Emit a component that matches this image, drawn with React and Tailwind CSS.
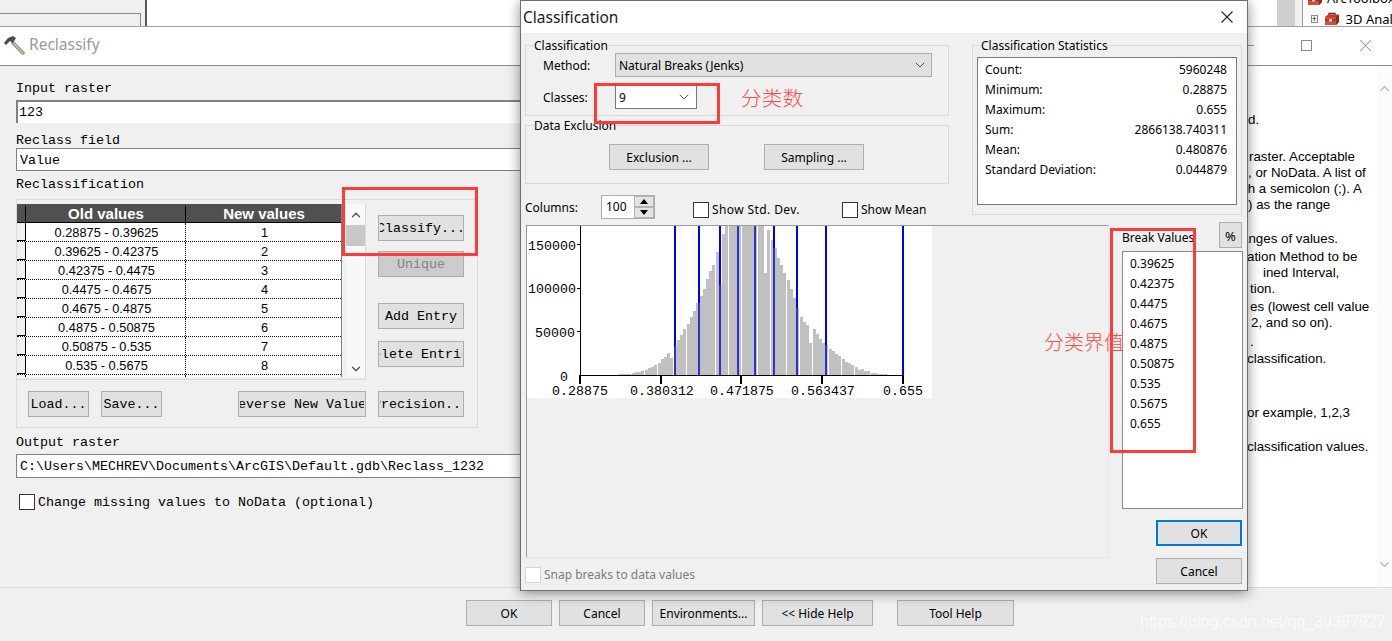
import { ChevronDown, ChevronUp } from "lucide-react"

const rows = [
  ["0.28875 - 0.39625", 1],
  ["0.39625 - 0.42375", 2],
  ["0.42375 - 0.4475", 3],
  ["0.4475 - 0.4675", 4],
  ["0.4675 - 0.4875", 5],
  ["0.4875 - 0.50875", 6],
  ["0.50875 - 0.535", 7],
  ["0.535 - 0.5675", 8],
  ["0.5675 - 0.655", 9],
]

const stats = [
  ["Count:", "5960248"],
  ["Minimum:", "0.28875"],
  ["Maximum:", "0.655"],
  ["Sum:", "2866138.740311"],
  ["Mean:", "0.480876"],
  ["Standard Deviation:", "0.044879"],
]

const breaks = ["0.39625", "0.42375", "0.4475", "0.4675", "0.4875", "0.50875", "0.535", "0.5675", "0.655"]

const helpLines = [
  { text: "d.", cls: "mt-[46px] pl-[48px]" },
  { text: "raster. Acceptable", cls: "mt-[21px] pl-[49px]" },
  { text: ", or NoData. A list of", cls: "pl-[48px]" },
  { text: "th a semicolon (;). A", cls: "pl-[44px]" },
  { text: ") as the range", cls: "pl-[48px]" },
  { text: "anges of values.", cls: "mt-[18px] pl-[41px]" },
  { text: "ation Method to be", cls: "mt-[2px] pl-[47px]" },
  { text: "ined Interval,", cls: "pl-[63px]" },
  { text: "tion.", cls: "pl-[50px]" },
  { text: "es (lowest cell value", cls: "mt-[2px] pl-[50px]" },
  { text: "2, and so on).", cls: "pl-[51px]" },
  { text: ".", cls: "mt-[3px] pl-[50px]" },
  { text: "classification.", cls: "mt-[1px] pl-[47px]" },
  { text: "or example, 1,2,3", cls: "mt-[38px] pl-[47px]" },
  { text: "classification values.", cls: "mt-[18px] pl-[47px]" },
]

// histogram column heights in px, starting at column 12
const barHeights = [
  1, 1, 1, 1, 2, 3.3, 3.3, 4.5, 5.5, 7, 8.5, 10, 12, 16, 18, 22, 17, 29, 35, 40, 46, 51, 58, 64, 72, 79, 86, 96, 104, 110,
  123, 90, 141, 160, 160, 160, 160, 160, 160, 160, 160, 160, 160, 160, 160, 102, 145, 135, 127, 117, 110, 102, 95, 86, 77,
  67, 58, 53, 50, 32, 46, 41, 36, 32, 30, 26, 24, 21, 19, 16, 13, 12, 10, 8, 5, 6, 4.3, 3.7, 2.3, 2.3, 1, 1, 1,
]
const breakLines = [675, 699, 720, 738, 755, 774, 797, 826, 903]
const xLabels = [
  ["0.28875", 580, 552],
  ["0.380312", 661, 630],
  ["0.471875", 741, 710],
  ["0.563437", 822, 791],
  ["0.655", 903, 883],
]
const yLabels = [
  ["150000", 245, 528],
  ["100000", 288, 528],
  ["50000", 332, 535],
]

const tones = {
  normal: "border border-[#adadad] bg-[#e1e1e1]",
  disabled: "border border-[#adadad] bg-[#cccccc] text-[#838383]",
  focus: "border-2 border-[#0078d7] bg-[#e1e1e1]",
}

const Btn = ({ children, className = "", tone = "normal" }) => (
  <div className={`flex h-[26px] shrink-0 items-center whitespace-nowrap pt-[2px] ${tones[tone]} ${className}`}>
    <div className="mx-px flex min-w-0 flex-1 justify-center overflow-hidden">
      <span className="shrink-0">{children}</span>
    </div>
  </div>
)

const Histogram = () => (
  <svg viewBox="527 226 405 172" className="block h-[172px] w-[405px] bg-white">
    {barHeights.map((h, i) => {
      const x = Math.round(580 + (i + 12) * 3.23)
      return <rect key={i} x={x} y={375 - h} width="3" height={h} fill="#c0c0c0" shapeRendering="crispEdges" />
    })}
    {breakLines.map((x) => {
      const col = Math.floor((x - 580) / 3.23) - 12
      const h = barHeights[col] || 0
      return (
        <g key={x} shapeRendering="crispEdges">
          <rect x={x - 1} y="226" width="2" height={149 - h} fill="#0000ff" />
          <rect x={x - 1} y={375 - h} width="2" height={h} fill="#3030d0" />
          <rect x={x - 1} y="375" width="2" height="1" fill="#ffff60" />
        </g>
      )
    })}
    <g fill="#000" shapeRendering="crispEdges">
      <rect x="580" y="226" width="1" height="150" />
      <rect x="579" y="375" width="325" height="1" />
      <rect x="577" y="244" width="4" height="1" />
      <rect x="577" y="288" width="4" height="1" />
      <rect x="577" y="331" width="4" height="1" />
      {xLabels.map(([label, x]) => (
        <rect key={label} x={x - 1} y="376" width="2" height="8" />
      ))}
    </g>
    <g fontFamily="'Liberation Mono', monospace" fontSize="13.3" fill="#000">
      {yLabels.map(([label, y, x]) => (
        <text key={label} x={x} y={y + 5}>
          {label}
        </text>
      ))}
      <text x="564" y="381" textAnchor="middle">
        0
      </text>
      {xLabels.map(([label, , x]) => (
        <text key={label} x={x} y="395">
          {label}
        </text>
      ))}
    </g>
  </svg>
)

const Toolbox = () => (
  <svg width="16" height="14" viewBox="0 0 16 14" className="shrink-0">
    <path d="M5 3 V1.5 H11 V3" fill="none" stroke="#6b2a20" strokeWidth="1.3" />
    <path d="M1 5 L4 2.5 H15 V10 L12 13 H1 Z" fill="#b5402f" />
    <path d="M1 5 H12 V13 H1 Z" fill="#c9513d" />
    <path d="M12 5 L15 2.5 V10 L12 13 Z" fill="#8a2c20" />
    <path d="M1 8 H12" stroke="#7d2a1e" />
    <rect x="5" y="7" width="3" height="2.5" fill="#e8c9a0" />
  </svg>
)

const Hammer = () => (
  <svg width="22" height="22" viewBox="0 0 22 22" className="shrink-0">
    <path d="M10 9 L20 19" stroke="#8f8468" strokeWidth="3.4" strokeLinecap="round" />
    <path d="M10 9 L20 19" stroke="#d2c8ae" strokeWidth="1.4" strokeLinecap="round" />
    <path d="M1 9 L5 4 L10 2 L13 4 L10 9 L7 7 L3 11 Z" fill="#4a4a4a" />
  </svg>
)

const Spinner = () => (
  <div className="flex h-[24px] w-[54px] border border-[#adadad] bg-white">
    <div className="flex w-[32px] items-center pl-[4px]">100</div>
    <div className="flex w-[20px] flex-col bg-[#e4e4e4]">
      <div className="flex h-[11px] items-center justify-center border border-[#b4b4b4]">
        <svg width="8" height="5" viewBox="0 0 8 5">
          <path d="M4 0 L8 5 H0 Z" fill="#000" />
        </svg>
      </div>
      <div className="flex h-[11px] items-center justify-center border border-[#b4b4b4]">
        <svg width="8" height="5" viewBox="0 0 8 5">
          <path d="M0 0 H8 L4 5 Z" fill="#000" />
        </svg>
      </div>
    </div>
  </div>
)

const ClassificationDialog = () => (
  <div className="absolute left-[520px] top-0 flex h-[591px] w-[728px] flex-col border border-[#6f6f6f] bg-[#f0f0f0] font-['Noto_Sans',sans-serif] text-[12px] leading-[16px] text-black shadow-[0_2px_12px_rgba(0,0,0,0.45)]">
    <div className="flex h-[32px] shrink-0 items-center justify-between bg-white pl-[2px] pr-[14px]">
      <span className="text-[15.5px] text-[#1a1a1a]">Classification</span>
      <svg width="12" height="12" viewBox="0 0 12 12">
        <path d="M0.5 0.5 L11.5 11.5 M11.5 0.5 L0.5 11.5" stroke="#222" strokeWidth="1.1" />
      </svg>
    </div>

    <div className="flex pl-[4px] pt-[4px]">
      <div className="w-[424px]">
        <fieldset className="border border-[#d9d9d9]">
          <legend className="ml-[8px] h-[16px] leading-[18px]">Classification</legend>
          <div className="flex h-[24px] items-center pl-[17px]">
            <span className="w-[72px] pt-[2px]">Method:</span>
            <div className="flex h-[24px] w-[317px] items-center justify-between border border-[#adadad] bg-[#e1e1e1] px-[3px]">
              <span className="pt-[2px]">Natural Breaks (Jenks)</span>
              <ChevronDown size={16} strokeWidth={1} />
            </div>
          </div>
          <div className="mb-[6px] mt-[8px] flex h-[24px] items-center pl-[17px]">
            <span className="w-[72px] pt-[2px]">Classes:</span>
            <div className="flex h-[24px] w-[82px] items-center justify-between border border-[#7a7a7a] bg-white px-[3px]">
              <span className="pt-[2px]">9</span>
              <ChevronDown size={16} strokeWidth={1} className="mr-px" />
            </div>
          </div>
        </fieldset>
        <fieldset className="mt-[1px] border border-[#d9d9d9]">
          <legend className="ml-[8px] h-[16px] leading-[18px]">Data Exclusion</legend>
          <div className="flex pb-[13px] pl-[83px] pt-[11px]">
            <Btn className="w-[100px]">Exclusion ...</Btn>
            <Btn className="ml-[55px] w-[100px]">Sampling ...</Btn>
          </div>
        </fieldset>
        <div className="mt-[11px] flex h-[24px] items-center">
          <span className="w-[76px] pt-[2px]">Columns:</span>
          <Spinner />
          <div className="ml-[38px] mt-[6px] flex items-center">
            <div className="h-[16px] w-[16px] border border-[#333] bg-white" />
            <span className="ml-[3px] w-[88px] whitespace-nowrap tracking-[0.4px]">Show Std. Dev.</span>
          </div>
          <div className="ml-[42px] mt-[6px] flex items-center">
            <div className="h-[16px] w-[16px] border border-[#333] bg-white" />
            <span className="ml-[3px] whitespace-nowrap">Show Mean</span>
          </div>
        </div>
      </div>
      <fieldset className="ml-[23px] h-[178px] w-[270px] border border-[#d9d9d9]">
        <legend className="ml-[8px] h-[16px] leading-[18px]">Classification Statistics</legend>
        <div className="mx-[4px] mt-[4px] h-[148px] border border-[#7a7a7a] bg-white pl-[7px] pr-[9px] pt-[2px]">
          {stats.map(([label, value]) => (
            <div key={label} className="flex h-[20px] items-center justify-between">
              <span>{label}</span>
              <span>{value}</span>
            </div>
          ))}
        </div>
      </fieldset>
    </div>

    <div className="mt-[3px] flex flex-1 pl-[5px]">
      <div className="w-[583px] pt-[3px]">
        <div className="h-[333px] border-b border-l border-r border-t border-b-[#e8e8e8] border-l-[#9a9a9a] border-r-[#e8e8e8] border-t-[#9a9a9a]">
          <Histogram />
        </div>
        <div className="ml-[-1px] mt-[9px] flex items-center text-[#7d7d7d]">
          <div className="h-[16px] w-[16px] border border-[#d4d4d4] bg-white" />
          <span className="ml-[3px]">Snap breaks to data values</span>
        </div>
      </div>
      <div className="ml-[13px] flex w-[121px] flex-col">
        <div className="flex h-[26px] items-center justify-between">
          <span className="pt-[5px]">Break Values</span>
          <Btn className="mr-px w-[23px] text-[13px]">%</Btn>
        </div>
        <div className="mt-[3px] h-[258px] border border-[#8a8a8a] bg-white pl-[7px] pt-[2px]">
          {breaks.map((b) => (
            <div key={b} className="flex h-[20px] items-center">
              {b}
            </div>
          ))}
        </div>
        <Btn tone="focus" className="ml-[34px] mt-[11px] w-[86px]">
          OK
        </Btn>
        <Btn className="ml-[34px] mt-[12px] w-[86px]">Cancel</Btn>
      </div>
    </div>
  </div>
)

const ReclassTable = () => (
  <div className="flex h-[176px] w-[349px] border-b border-r border-[#dadada]">
    <div className="h-[173px] w-[325px] overflow-hidden border-r border-[#808080] bg-white font-['Liberation_Sans',sans-serif] text-[12.8px] text-black">
      <div className="flex h-[19px] border-b border-black bg-[#505050] pt-[2px] text-[15px] font-bold text-white">
        <div className="w-[9px] border-r border-black" />
        <div className="flex w-[160px] items-center justify-center border-r border-black pl-px">Old values</div>
        <div className="flex flex-1 items-center justify-center pl-px">New values</div>
      </div>
      {rows.map(([range, value]) => (
        <div key={value} className="flex h-[19px] border-b border-dotted border-black">
          <div className="w-[9px] border-b border-r border-black bg-[#f0f0f0]" />
          <div className="flex w-[160px] items-center justify-center border-r border-dotted border-black pl-[2px] pt-[2px]">
            {range}
          </div>
          <div className="flex flex-1 items-center justify-center pl-[2px] pt-[2px]">{value}</div>
        </div>
      ))}
    </div>
    <div className="ml-[4px] flex h-[173px] w-[19px] flex-col items-center bg-[#f8f8f8]">
      <ChevronUp size={14} strokeWidth={2.4} className="mt-[4px] text-[#555]" />
      <div className="mt-[3px] h-[21px] w-full bg-[#c8c8c8]" />
      <ChevronDown size={14} strokeWidth={2.4} className="mt-auto mb-[1px] text-[#555]" />
    </div>
  </div>
)

const ReclassForm = () => (
  <div className="w-[1200px] shrink-0 pl-[16px] pt-[14px] font-['Liberation_Mono',monospace] text-[13.33px] leading-[16px] text-black">
    <div className="h-[16px] w-[400px] pt-px">Input raster</div>
    <div className="mt-[4px] flex h-[23px] items-center border-l-2 border-t-2 border-[#808080] bg-white pl-[1px]">123</div>
    <div className="mt-[9px] h-[16px] pt-px">Reclass field</div>
    <div className="flex h-[23px] items-center border border-[#808080] bg-white pl-[3px] pt-[2px]">Value</div>
    <div className="mt-[5px] h-[16px] pt-px">Reclassification</div>
    <div className="mt-[7px] h-[229px] w-[462px] border border-[#dadada] pt-[4px]">
      <div className="flex">
        <ReclassTable />
        <div className="ml-[12px] w-[86px] pt-[11px]">
          <Btn>Classify...</Btn>
          <Btn tone="disabled" className="mt-[10px]">
            Unique
          </Btn>
          <Btn className="mt-[26px]">Add Entry</Btn>
          <Btn className="mt-[12px]">Delete Entries</Btn>
        </div>
      </div>
      <div className="mt-[11px] flex pl-[11px]">
        <Btn className="w-[61px]">Load...</Btn>
        <Btn className="ml-[12px] w-[61px]">Save...</Btn>
        <Btn className="ml-[76px] w-[128px]">Reverse New Values</Btn>
        <Btn className="ml-[12px] w-[86px]">Precision...</Btn>
      </div>
    </div>
    <div className="mt-[6px] h-[16px] pt-px">Output raster</div>
    <div className="mt-[4px] flex h-[24px] items-center border border-[#808080] bg-white pl-[3px] pt-[2px]">
      {"C:\\Users\\MECHREV\\Documents\\ArcGIS\\Default.gdb\\Reclass_1232"}
    </div>
    <div className="ml-[3px] mt-[15px] flex items-center">
      <div className="h-[16px] w-[16px] border border-[#333] bg-white" />
      <span className="ml-[3px] pt-[2px]">Change missing values to NoData (optional)</span>
    </div>
  </div>
)

const HelpPanel = () => (
  <div className="flex min-w-0 flex-1 bg-white font-['Liberation_Sans',sans-serif] text-[13.33px] leading-[16px] text-black">
    <div className="min-w-0 flex-1 overflow-hidden whitespace-nowrap">
      {helpLines.map((line) => (
        <div key={line.text} className={`h-[16px] ${line.cls}`}>
          {line.text}
        </div>
      ))}
    </div>
    <div className="flex w-[15px] flex-col items-center justify-between bg-[#fbfbfb] py-[15px] text-[#c4c4c4]">
      <ChevronUp size={15} strokeWidth={2.6} />
      <ChevronDown size={15} strokeWidth={2.6} />
    </div>
  </div>
)

const TopStrip = () => (
  <div className="flex h-[26px] shrink-0 bg-white">
    <div className="w-[147px] border-r-2 border-[#5a5a5a] bg-[#f0f0f0] pt-[13px]">
      <div className="h-[13px] w-[141px] border-r border-t border-[#8a8a8a] bg-[#f0f0f0]" />
    </div>
    <div className="flex-1" />
    <div className="w-[18px] bg-[#cfcfcf]" />
    <div className="w-[8px] border-r border-[#999] bg-[#f0f0f0]" />
    <div className="w-[89px] overflow-hidden whitespace-nowrap font-['Noto_Sans',sans-serif] text-[13px] leading-[16px] text-black">
      <div className="flex h-[6px] items-end pl-[4px]">
        <Toolbox />
        <span className="ml-[4px]">ArcToolbox</span>
      </div>
      <div className="mt-[5px] flex items-center pl-[8px]">
        <div className="flex h-[8px] w-[8px] items-center justify-center border border-[#8a8a8a] text-[8px] leading-[8px]">+</div>
        <span className="ml-[6px] flex">
          <Toolbox />
        </span>
        <span className="ml-[6px]">3D Analyst Tools</span>
      </div>
    </div>
  </div>
)

export default function App() {
  return (
    <div className="relative flex h-[641px] w-[1392px] flex-col overflow-hidden bg-white">
      <TopStrip />

      <div className="flex flex-1 flex-col border-t border-[#a0a0a0] bg-[#f0f0f0]">
        <div className="flex h-[39px] shrink-0 items-center border-b border-[#8a8a8a] bg-white pb-[2px] pl-[3px] pr-[21px]">
          <Hammer />
          <span className="ml-[4px] font-['Noto_Sans',sans-serif] text-[15.5px] text-[#9a9a9a]">Reclassify</span>
          <div className="ml-auto h-px w-[11px] bg-[#9a9a9a]" />
          <div className="ml-[47px] h-[11px] w-[11px] border border-[#8a8a8a]" />
          <svg width="11" height="11" viewBox="0 0 11 11" className="ml-[48px]">
            <path d="M0 0 L11 11 M11 0 L0 11" stroke="#a8a8a8" strokeWidth="1.1" />
          </svg>
        </div>
        <div className="flex h-[521px] shrink-0">
          <ReclassForm />
          <HelpPanel />
        </div>
        <div className="flex flex-1 border-t border-[#dcdcdc] pl-[466px] pt-[12px] font-['Noto_Sans',sans-serif] text-[12px] text-black">
          <Btn className="w-[86px]">OK</Btn>
          <Btn className="ml-[7px] w-[86px]">Cancel</Btn>
          <Btn className="ml-[7px] w-[103px]">Environments...</Btn>
          <Btn className="ml-[7px] w-[111px]">{"<< Hide Help"}</Btn>
          <Btn className="ml-[24px] w-[117px]">Tool Help</Btn>
        </div>
      </div>

      <ClassificationDialog />

      <div className="absolute left-[342px] top-[187px] h-[69px] w-[136px] border-[3px] border-[#ff3b3b]" />
      <div className="absolute left-[594px] top-[83px] h-[41px] w-[126px] border-[3px] border-[#ff3b3b]" />
      <div className="absolute left-[1110px] top-[228px] h-[225px] w-[86px] border-[3px] border-[#ff3b3b]" />
      <div className="absolute left-[741px] top-[83px] font-['Noto_Sans_CJK_SC',sans-serif] text-[20.7px] font-light leading-[28px] text-[#ff4d4d]">
        分类数
      </div>
      <div className="absolute left-[1044px] top-[328px] font-['Noto_Sans_CJK_SC',sans-serif] text-[20px] font-light leading-[28px] text-[#ff4d4d]">
        分类界值
      </div>
      <div className="absolute left-[1140px] top-[612px] font-['Liberation_Sans',sans-serif] text-[16px] leading-[20px] text-white/70">
        https://blog.csdn.net/qq_39397927
      </div>
    </div>
  )
}
